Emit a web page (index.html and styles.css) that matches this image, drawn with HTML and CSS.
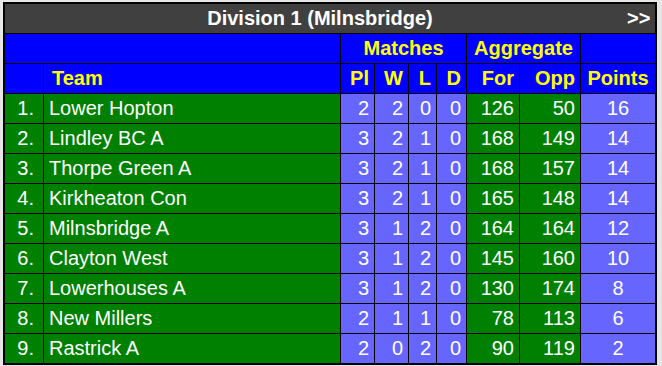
FILE: index.html
```html
<!DOCTYPE html>
<html>
<head>
<meta charset="utf-8">
<link rel="stylesheet" href="styles.css">
</head>
<body>
<div class="league">
  <div class="title-bar">
    <span class="title">Division 1 (Milnsbridge)</span>
    <span class="next">&gt;&gt;</span>
  </div>

  <div class="hd span2"></div>
  <div class="hd span4 center">Matches</div>
  <div class="hd span2 center">Aggregate</div>
  <div class="hd"></div>

  <div class="hd"></div>
  <div class="hd team-hd">Team</div>
  <div class="hd num">Pl</div>
  <div class="hd num">W</div>
  <div class="hd num">L</div>
  <div class="hd num">D</div>
  <div class="hd num">For</div>
  <div class="hd num">Opp</div>
  <div class="hd center">Points</div>

  <div class="g pos">1.</div><div class="g team">Lower Hopton</div><div class="p num">2</div><div class="p num">2</div><div class="p num">0</div><div class="p num">0</div><div class="g num">126</div><div class="g num">50</div><div class="p center">16</div>
  <div class="g pos">2.</div><div class="g team">Lindley BC A</div><div class="p num">3</div><div class="p num">2</div><div class="p num">1</div><div class="p num">0</div><div class="g num">168</div><div class="g num">149</div><div class="p center">14</div>
  <div class="g pos">3.</div><div class="g team">Thorpe Green A</div><div class="p num">3</div><div class="p num">2</div><div class="p num">1</div><div class="p num">0</div><div class="g num">168</div><div class="g num">157</div><div class="p center">14</div>
  <div class="g pos">4.</div><div class="g team">Kirkheaton Con</div><div class="p num">3</div><div class="p num">2</div><div class="p num">1</div><div class="p num">0</div><div class="g num">165</div><div class="g num">148</div><div class="p center">14</div>
  <div class="g pos">5.</div><div class="g team">Milnsbridge A</div><div class="p num">3</div><div class="p num">1</div><div class="p num">2</div><div class="p num">0</div><div class="g num">164</div><div class="g num">164</div><div class="p center">12</div>
  <div class="g pos">6.</div><div class="g team">Clayton West</div><div class="p num">3</div><div class="p num">1</div><div class="p num">2</div><div class="p num">0</div><div class="g num">145</div><div class="g num">160</div><div class="p center">10</div>
  <div class="g pos">7.</div><div class="g team">Lowerhouses A</div><div class="p num">3</div><div class="p num">1</div><div class="p num">2</div><div class="p num">0</div><div class="g num">130</div><div class="g num">174</div><div class="p center">8</div>
  <div class="g pos">8.</div><div class="g team">New Millers</div><div class="p num">2</div><div class="p num">1</div><div class="p num">1</div><div class="p num">0</div><div class="g num">78</div><div class="g num">113</div><div class="p center">6</div>
  <div class="g pos">9.</div><div class="g team">Rastrick A</div><div class="p num">2</div><div class="p num">0</div><div class="p num">2</div><div class="p num">0</div><div class="g num">90</div><div class="g num">119</div><div class="p center">2</div>
</div>
</body>
</html>
```
FILE: styles.css
```css
html, body {
  margin: 0;
  padding: 0;
  background: #e6e6e6;
}

body {
  padding: 2px 0 0 3px;
  font-family: "Liberation Sans", Arial, sans-serif;
}

.league {
  display: grid;
  grid-template-columns: 38px 296px 33px 33px 27px 29px 52px 60px 74px;
  grid-auto-rows: 29px;
  gap: 1px;
  width: 650px;
  background: #000;
  border: 2px solid #000;
  font-size: 20px;
  line-height: 29px;
}

.title-bar {
  grid-column: 1 / -1;
  display: flex;
  background: #404040;
  color: #fff;
  font-weight: bold;
  padding-right: 6px;
}

.title {
  flex: 1;
  text-align: center;
  padding-left: 8px;
}

.next {
  width: 22px;
}

.hd {
  background: #0000ff;
  color: #ffff00;
  font-weight: bold;
}

.span2 { grid-column: span 2; }
.span4 { grid-column: span 4; }

.center { text-align: center; }

.num {
  text-align: right;
  padding-right: 5px;
}

.team-hd { padding-left: 8px; }

.g {
  background: #008000;
  color: #fff;
}

.p {
  background: #6666ff;
  color: #fff;
}

.pos {
  text-align: right;
  padding-right: 9px;
}

.team { padding-left: 5px; }
```
